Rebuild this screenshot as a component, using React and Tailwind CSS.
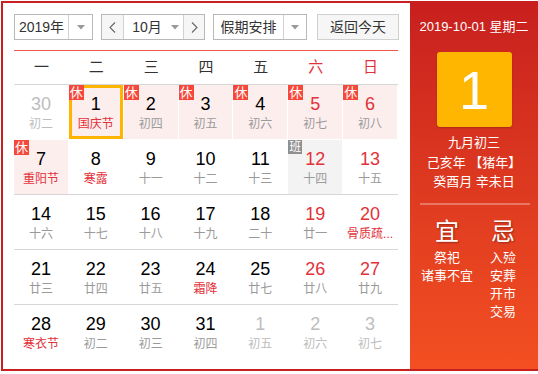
import React from "react";

const FONT = { fontFamily: '"Liberation Sans", Arial, "Noto Sans CJK SC", sans-serif' };

const weeks = [
  [
    { d: 30, l: "初二", other: true },
    { d: 1, l: "国庆节", rest: true, sel: true, lr: true },
    { d: 2, l: "初四", rest: true },
    { d: 3, l: "初五", rest: true },
    { d: 4, l: "初六", rest: true },
    { d: 5, l: "初七", rest: true, we: true },
    { d: 6, l: "初八", rest: true, we: true },
  ],
  [
    { d: 7, l: "重阳节", rest: true, lr: true },
    { d: 8, l: "寒露", lr: true },
    { d: 9, l: "十一" },
    { d: 10, l: "十二" },
    { d: 11, l: "十三" },
    { d: 12, l: "十四", work: true, we: true },
    { d: 13, l: "十五", we: true },
  ],
  [
    { d: 14, l: "十六" },
    { d: 15, l: "十七" },
    { d: 16, l: "十八" },
    { d: 17, l: "十九" },
    { d: 18, l: "二十" },
    { d: 19, l: "廿一", we: true },
    { d: 20, l: "骨质疏...", we: true, lr: true },
  ],
  [
    { d: 21, l: "廿三" },
    { d: 22, l: "廿四" },
    { d: 23, l: "廿五" },
    { d: 24, l: "霜降", lr: true },
    { d: 25, l: "廿七" },
    { d: 26, l: "廿八", we: true },
    { d: 27, l: "廿九", we: true },
  ],
  [
    { d: 28, l: "寒衣节", lr: true },
    { d: 29, l: "初二" },
    { d: 30, l: "初三" },
    { d: 31, l: "初四" },
    { d: 1, l: "初五", other: true },
    { d: 2, l: "初六", other: true },
    { d: 3, l: "初七", other: true },
  ],
];

function Caret() {
  return (
    <svg width="8" height="5" viewBox="0 0 8 5">
      <path d="M0 0 L8 0 L4 4.5 Z" fill="#999" />
    </svg>
  );
}

function Chevron({ dir }) {
  return (
    <svg width="7" height="11" viewBox="0 0 7 11">
      <path
        d={dir === "l" ? "M6 0.5 L1 5.5 L6 10.5" : "M1 0.5 L6 5.5 L1 10.5"}
        fill="none"
        stroke="#666"
        strokeWidth="1.1"
      />
    </svg>
  );
}

function Cell({ c }) {
  let numColor = "text-black";
  if (c.other) numColor = "text-[#bdbdbd]";
  else if (c.we) numColor = "text-[#e3313a]";
  let lunColor = "text-[#9a9a9a]";
  if (c.other) lunColor = "text-[#bdbdbd]";
  else if (c.lr) lunColor = "text-[#e3313a]";
  let bg = "";
  if (c.rest) bg = "bg-[#fdeeee]";
  if (c.work) bg = "bg-[#f3f3f3]";
  return (
    <div className="pr-[1px] h-full">
      <div className={`relative h-full flex flex-col items-center pt-[8px] ${bg}`}>
        <div className={`text-[18px] leading-[22px] ${numColor}`}>{c.d}</div>
        <div className={`text-[12px] leading-[16px] mt-[1px] whitespace-nowrap ${lunColor}`}>{c.l}</div>
        {c.sel && <div className="absolute inset-0 border-[3px] border-[#ffb400]" />}
        {c.rest && (
          <div className="absolute left-0 top-0 w-[15px] h-[15px] bg-[#f6483a] text-white text-[13px] leading-[15px] text-center">
            休
          </div>
        )}
        {c.work && (
          <div className="absolute left-0 top-0 w-[14px] h-[14px] bg-[#8f8f8f] text-white text-[12px] leading-[14px] text-center">
            班
          </div>
        )}
      </div>
    </div>
  );
}

export default function App() {
  const wd = ["一", "二", "三", "四", "五", "六", "日"];
  return (
    <div style={FONT} className="mt-[1px] ml-[1px] w-[537px] h-[370px] border-l-2 border-t-2 border-b-2 border-[#c9201f] flex bg-white">
      <div className="w-[407px] pl-[11px] pt-[11px]">
        {/* toolbar */}
        <div className="flex items-center h-[26px] text-[14px] text-[#333]">
          <div className="flex h-[26px] w-[79px] border border-[#b8b8b8] bg-white">
            <div className="w-[54px] flex items-center justify-center border-r border-[#d0d0d0]">2019年</div>
            <div className="flex-1 flex items-center justify-center">
              <Caret />
            </div>
          </div>
          <div className="flex h-[26px] w-[104px] ml-[8px] border border-[#b8b8b8] bg-white">
            <div className="w-[22px] flex items-center justify-center border-r border-[#d0d0d0] bg-[#f6f6f6]">
              <Chevron dir="l" />
            </div>
            <div className="w-[60px] flex items-center justify-center gap-[9px] border-r border-[#d0d0d0] pl-[4px]">
              <span>10月</span>
              <Caret />
            </div>
            <div className="flex-1 flex items-center justify-center bg-[#f6f6f6]">
              <Chevron dir="r" />
            </div>
          </div>
          <div className="flex h-[26px] w-[94px] ml-[8px] border border-[#b8b8b8] bg-white">
            <div className="w-[70px] flex items-center justify-center border-r border-[#d0d0d0]">假期安排</div>
            <div className="flex-1 flex items-center justify-center">
              <Caret />
            </div>
          </div>
          <div className="flex h-[26px] w-[82px] ml-[10px] border border-[#d0d0d0] bg-[#f6f6f6] items-center justify-center">
            返回今天
          </div>
        </div>
        {/* red line */}
        <div className="w-[384px] h-[1px] bg-[#f0574a] mt-[10px]" />
        {/* weekday header */}
        <div className="w-[384px] grid grid-cols-7 h-[34px] border-b border-[#d6d6d6]">
          {wd.map((w, i) => (
            <div
              key={w}
              className={`flex items-center justify-center text-[15px] ${i >= 5 ? "text-[#e3313a]" : "text-[#333]"}`}
            >
              {w}
            </div>
          ))}
        </div>
        {/* weeks */}
        <div className="w-[384px]">
          {weeks.map((row, ri) => (
            <div
              key={ri}
              className={`grid grid-cols-7 h-[55px] ${ri === 0 ? "pb-[1px]" : ri < 4 ? "border-b border-[#d6d6d6]" : ""}`}
            >
              {row.map((c, ci) => (
                <Cell key={ci} c={c} />
              ))}
            </div>
          ))}
        </div>
      </div>
      {/* right panel */}
      <div className="flex-1 bg-linear-to-b from-[#c81f1e] to-[#f34f22] flex flex-col items-center text-white">
        <div className="mt-[14px] text-[13px] leading-[20px] whitespace-nowrap">2019-10-01 星期二</div>
        <div className="mt-[15px] w-[75px] h-[75px] rounded-[3px] bg-[#ffb600] shadow-[0_1px_2px_rgba(0,0,0,0.2)] flex items-center justify-center text-[54px] leading-none">
          1
        </div>
        <div className="mt-[6px] text-[13px] leading-[19.5px] text-center">
          <div>九月初三</div>
          <div>己亥年 【猪年】</div>
          <div>癸酉月 辛未日</div>
        </div>
        <div className="mt-[11px] ml-[2px] w-[110px] h-[2px] bg-white/30" />
        <div className="w-[112px] ml-[2px] grid grid-cols-2 mt-[12px]">
          <div className="flex flex-col items-center">
            <div className="text-[24px] leading-[30px] [text-shadow:1px_1px_2px_rgba(0,0,0,0.35)]">宜</div>
            <div className="mt-[2px] text-[13px] leading-[18px] text-center whitespace-nowrap">
              <div>祭祀</div>
              <div>诸事不宜</div>
            </div>
          </div>
          <div className="flex flex-col items-center">
            <div className="text-[24px] leading-[30px] [text-shadow:1px_1px_2px_rgba(0,0,0,0.35)]">忌</div>
            <div className="mt-[2px] text-[13px] leading-[18px] text-center">
              <div>入殓</div>
              <div>安葬</div>
              <div>开市</div>
              <div>交易</div>
            </div>
          </div>
        </div>
      </div>
    </div>
  );
}
